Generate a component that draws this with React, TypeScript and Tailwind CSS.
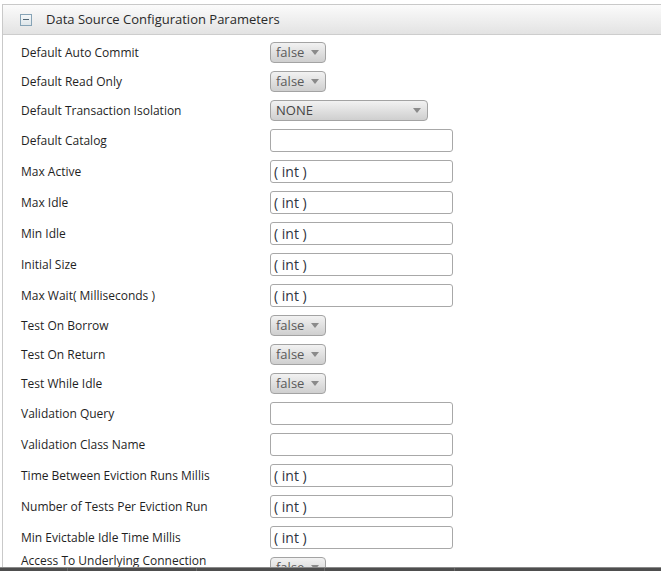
import React from "react";

type Field = { label: string; kind: "select" | "wide" | "text" | "int" };

const fields: Field[] = [
  { label: "Default Auto Commit", kind: "select" },
  { label: "Default Read Only", kind: "select" },
  { label: "Default Transaction Isolation", kind: "wide" },
  { label: "Default Catalog", kind: "text" },
  { label: "Max Active", kind: "int" },
  { label: "Max Idle", kind: "int" },
  { label: "Min Idle", kind: "int" },
  { label: "Initial Size", kind: "int" },
  { label: "Max Wait( Milliseconds )", kind: "int" },
  { label: "Test On Borrow", kind: "select" },
  { label: "Test On Return", kind: "select" },
  { label: "Test While Idle", kind: "select" },
  { label: "Validation Query", kind: "text" },
  { label: "Validation Class Name", kind: "text" },
  { label: "Time Between Eviction Runs Millis", kind: "int" },
  { label: "Number of Tests Per Eviction Run", kind: "int" },
  { label: "Min Evictable Idle Time Millis", kind: "int" },
  { label: "Access To Underlying Connection Allowed", kind: "select" },
];

function Arrow() {
  return (
    <svg width="8" height="5" viewBox="0 0 8 5" className="shrink-0">
      <path d="M0 0 H8 L4 5 Z" fill="#8a8a8a" />
    </svg>
  );
}

function Select({ text, wide }: { text: string; wide?: boolean }) {
  return (
    <div
      className={`flex h-[21px] items-center justify-between rounded-[4px] border border-[#a3a3a3] bg-gradient-to-b from-[#f2f2f2] to-[#cfcfcf] pl-[5px] pr-[6px] text-[13px] ${
        wide ? "w-[158px] text-[#444]" : "w-[56px] text-[#5a5a5a]"
      }`}
    >
      <span className="leading-none">{text}</span>
      <Arrow />
    </div>
  );
}

function Input({ value }: { value?: string }) {
  return (
    <div className="flex h-[23px] w-[183px] items-center rounded-[3px] border border-[#a8a8a8] bg-white pl-[3px] text-[14px] text-[#2d3340]">
      {value}
    </div>
  );
}

export default function App() {
  return (
    <div className="min-h-[571px] bg-white pt-[4px] font-['Open_Sans',sans-serif]">
      <div className="ml-[2px] min-h-[567px] border-l border-t border-[#c9c9c9]">
        <div className="flex h-[30px] items-center border-b border-[#cdcdcd] bg-gradient-to-b from-[#fbfbfb] to-[#e3e3e3] pl-[17px]">
          <div className="flex h-[12px] w-[12px] items-center justify-center border border-[#86a3b6] bg-gradient-to-b from-[#f4f7f9] to-[#dfe6ea]">
            <div className="h-[1px] w-[6px] bg-[#4f6573]" />
          </div>
          <span className="ml-[14px] text-[13px] text-[#2a2a2a]">Data Source Configuration Parameters</span>
        </div>

        <div className="pt-[3px]">
          {fields.map((f) => (
            <div
              key={f.label}
              className={`flex items-center ${f.kind === "select" || f.kind === "wide" ? "h-[29px]" : "h-[31px]"}`}
            >
              <div className="w-[249px] shrink-0 pl-[18px] text-[12px] leading-[15px] text-[#1f1f1f]">
                {f.label}
              </div>
              <div className="pl-[18px]">
                {f.kind === "select" && <Select text="false" />}
                {f.kind === "wide" && <Select text="NONE" wide />}
                {f.kind === "text" && <Input />}
                {f.kind === "int" && <Input value="( int )" />}
              </div>
            </div>
          ))}
        </div>
      </div>

      <div className="fixed bottom-0 left-0 right-0 flex h-[4px] border-t border-[#8a8a8a] bg-[#4e4e4e]">
        <div className="w-[68px] border-r border-[#6a6a6a]" />
        <div className="w-[129px] border-r border-[#6a6a6a]" />
        <div className="w-[128px] border-r border-[#6a6a6a]" />
        <div className="w-[130px] border-r border-[#6a6a6a]" />
      </div>
    </div>
  );
}
